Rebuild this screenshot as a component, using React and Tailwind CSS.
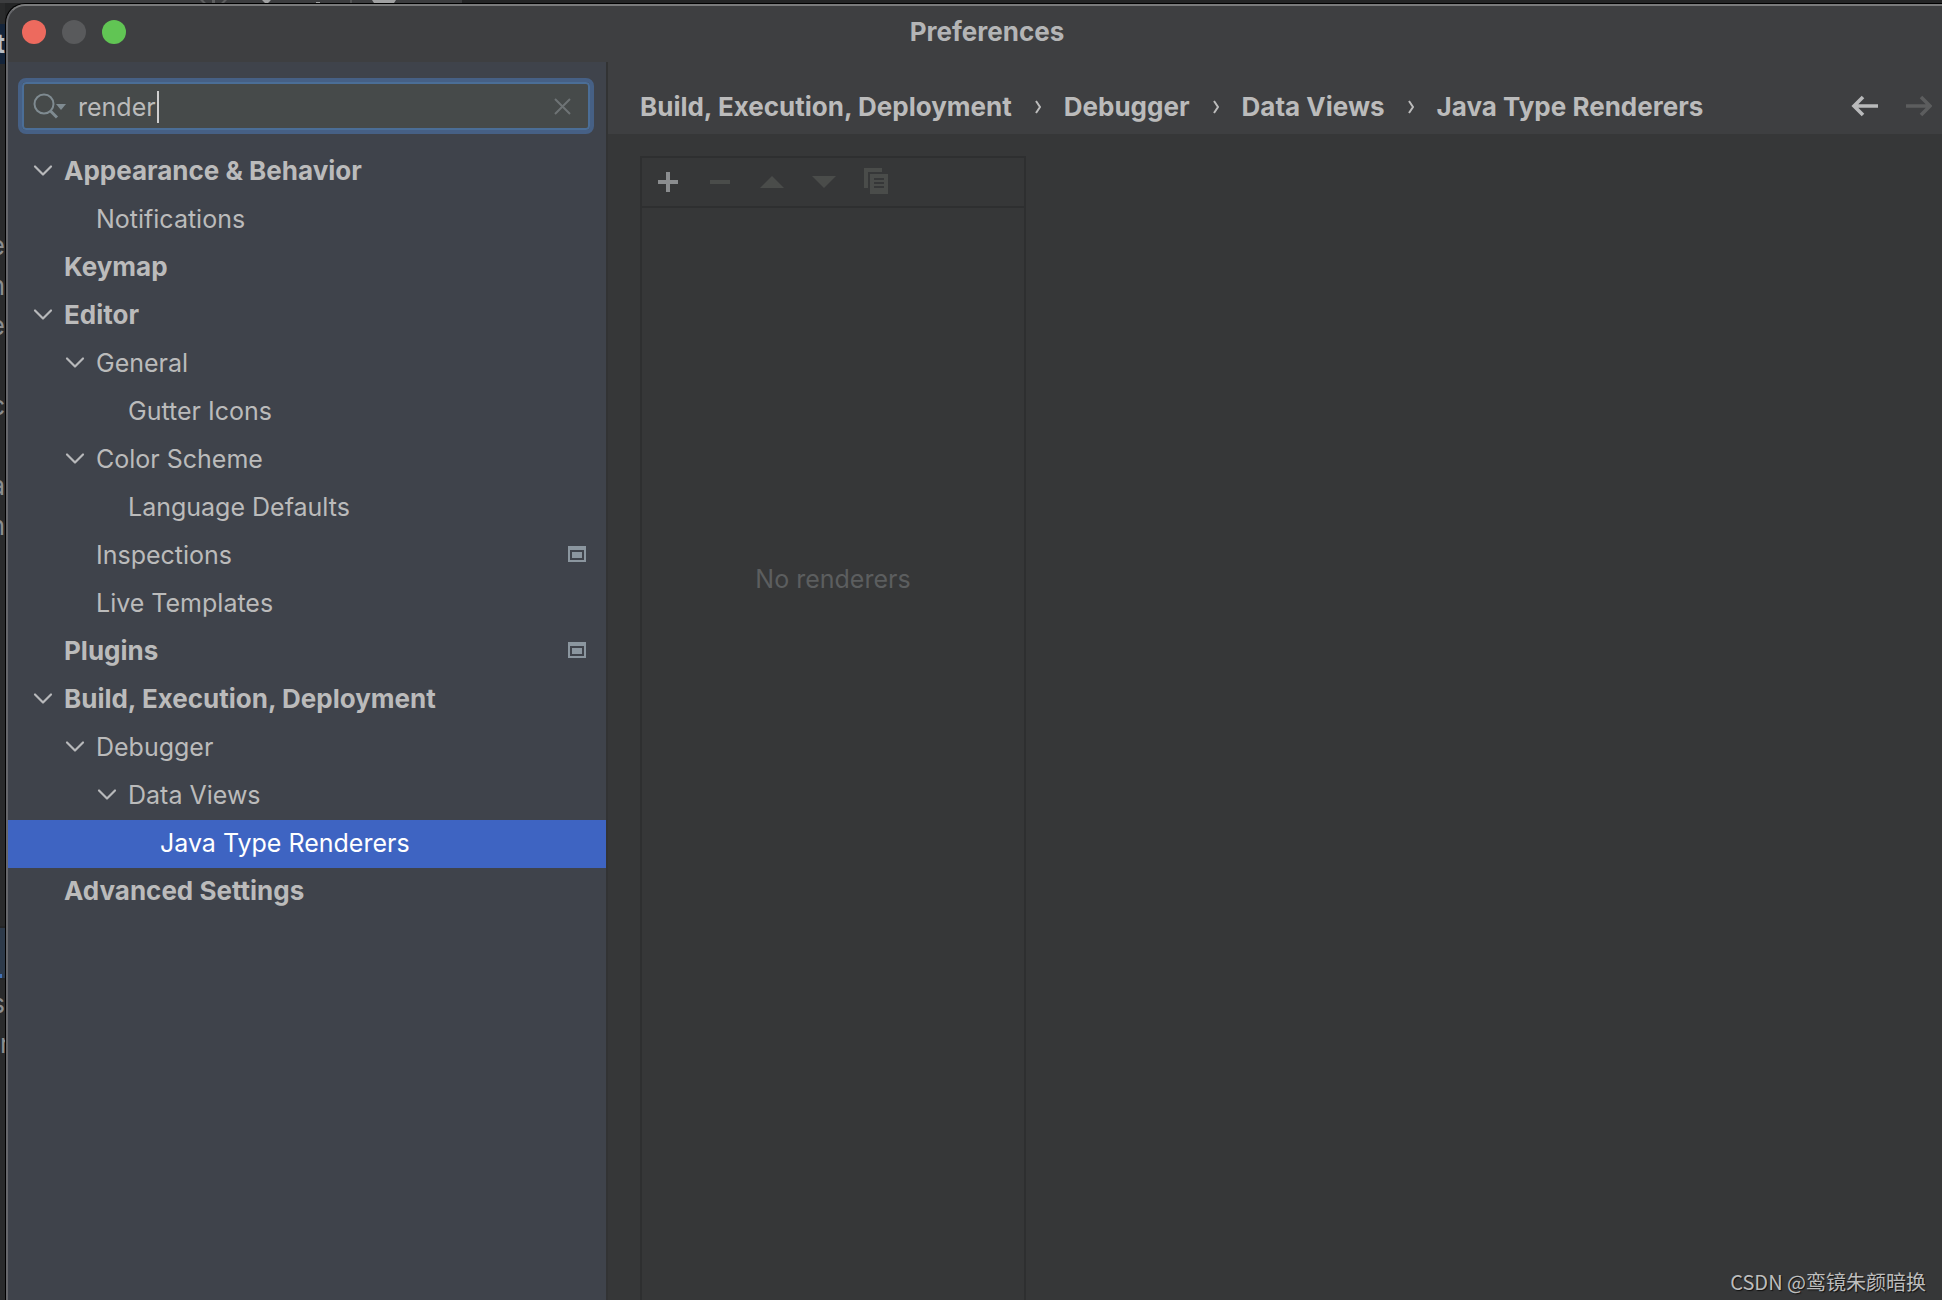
const TREE = [
  { label: "Appearance & Behavior", level: 0, open: true },
  { label: "Notifications", level: 1 },
  { label: "Keymap", level: 0 },
  { label: "Editor", level: 0, open: true },
  { label: "General", level: 1, open: true },
  { label: "Gutter Icons", level: 2 },
  { label: "Color Scheme", level: 1, open: true },
  { label: "Language Defaults", level: 2 },
  { label: "Inspections", level: 1, project: true },
  { label: "Live Templates", level: 1 },
  { label: "Plugins", level: 0, project: true },
  { label: "Build, Execution, Deployment", level: 0, open: true },
  { label: "Debugger", level: 1, open: true },
  { label: "Data Views", level: 2, open: true },
  { label: "Java Type Renderers", level: 3, selected: true },
  { label: "Advanced Settings", level: 0 },
];

const INDENT = ["pl-6", "pl-14", "pl-22", "pl-30"];
const CRUMBS = ["Build, Execution, Deployment", "Debugger", "Data Views", "Java Type Renderers"];

function Chevron() {
  return (
    <svg className="size-6" viewBox="0 0 24 24" fill="none" stroke="#b8b9bb" strokeWidth="2.2" strokeLinecap="round" strokeLinejoin="round">
      <path d="M3 7.500l8 8 8-8" />
    </svg>
  );
}

function ProjectIcon() {
  return (
    <svg className="size-6" viewBox="0 0 24 24" fill="#8b969f">
      <path fillRule="evenodd" d="M2 3h18v16H2zM4 7v10h14V7z" />
      <path d="M6 9h10v6H6z" />
    </svg>
  );
}

function TreeRow({ label, level, open, project, selected }) {
  const tone = selected ? "bg-[#3e64c2] text-white" : "text-[#bbbbbb]";
  const weight = level === 0 ? "text-[26px] font-bold" : "text-[25px] font-normal";
  return (
    <li>
      <button type="button" className={`flex h-12 w-full items-center gap-2 pr-4 pb-0.5 text-left ${INDENT[level]} ${tone} ${weight}`}>
        <span className="size-6 shrink-0">{open && <Chevron />}</span>
        <span className="grow whitespace-nowrap">{label}</span>
        {project && <ProjectIcon />}
      </button>
    </li>
  );
}

function Sidebar() {
  return (
    <aside className="w-[600px] shrink-0 border-r-2 border-[#323334] bg-[#3f434b]">
      <div className="pt-4 pr-3 pb-3.5 pl-2.5">
        <label className="flex h-14 items-center rounded-lg border-4 border-[#466085] bg-[#464a4a] pr-4 pl-2 ring-2 ring-[#4b6e97] ring-inset">
          <span className="sr-only">Search settings</span>
          <svg className="h-8 w-9 shrink-0" viewBox="0 0 36 32" fill="none" stroke="#7f8b91" strokeWidth="2">
            <circle cx="14" cy="14" r="9.500" />
            <path d="M20 20.500l7 7" strokeWidth="3" />
            <path d="M26 14h10l-5 6z" fill="#7f8b91" stroke="none" />
          </svg>
          <span className="ml-3 flex h-8 grow items-center pt-0.5">
            <input type="text" defaultValue="render" className="w-[79px] bg-transparent text-[25px] text-[#bbbbbb] outline-none" />
            <span className="h-8 w-0.5 bg-[#cfcfcf]" />
          </span>
          <button type="button" aria-label="Clear search">
            <svg className="size-5" viewBox="0 0 20 20" stroke="#6e7375" strokeWidth="2">
              <path d="M1 3l15 15M16 3L1 18" />
            </svg>
          </button>
        </label>
      </div>
      <ul>
        {TREE.map((row) => (
          <TreeRow key={row.label} {...row} />
        ))}
      </ul>
    </aside>
  );
}

function Breadcrumbs() {
  return (
    <header className="flex h-[72px] items-center justify-between bg-[#3e3f41] pt-[18px] pr-2.5 pl-8">
      <nav aria-label="Breadcrumb" className="flex items-center font-bold whitespace-nowrap text-[#bbbbbb]">
        {CRUMBS.map((crumb, i) => (
          <span key={crumb} className="flex items-center">
            {i > 0 && (
              <svg className="mx-[22px] h-4 w-2" viewBox="0 0 8 16" fill="none" stroke="#bbbbbb" strokeWidth="2">
                <path d="M2 2l4 6-4 6" />
              </svg>
            )}
            <a href="#">{crumb}</a>
          </span>
        ))}
      </nav>
      <div className="flex gap-[26px]">
        <button type="button" aria-label="Back">
          <svg className="h-6 w-7" viewBox="0 0 28 24" fill="none" stroke="#b9babb" strokeWidth="3.600">
            <path d="M28 11H4M13 2L4 11l9 9" />
          </svg>
        </button>
        <button type="button" aria-label="Forward" disabled>
          <svg className="h-6 w-7" viewBox="0 0 28 24" fill="none" stroke="#5c5d5e" strokeWidth="3.600">
            <path d="M2 11h24M17 2l9 9-9 9" />
          </svg>
        </button>
      </div>
    </header>
  );
}

const TOOLS = [
  { name: "Add", color: "#8b8d8f", path: "M4 12h8V4h4v8h8v4h-8v8h-4v-8H4z" },
  { name: "Remove", color: "#4a4c4a", path: "M4 12h20v4H4z" },
  { name: "Move up", color: "#4a4c4a", path: "M2 20L14 8l12 12z" },
  { name: "Move down", color: "#4a4c4a", path: "M2 8h24L14 20z" },
  { name: "Copy", color: "#4a4c4a", path: "M2 0h18v4H6v16H2zM8 6h18v20H8zM12 10v2h10v-2zM12 14v2h10v-2zM12 18v2h10v-2z" },
];

function RendererList() {
  return (
    <section className="flex w-[386px] flex-col border-2 border-b-0 border-[#2e2f30]">
      <div className="flex h-[50px] shrink-0 items-center gap-6 border-b-2 border-[#2e2f30] px-3">
        {TOOLS.map((tool) => (
          <button key={tool.name} type="button" aria-label={tool.name} disabled={tool.name !== "Add"}>
            <svg className="size-7" viewBox="0 0 28 28" fill={tool.color} fillRule="evenodd">
              <path d={tool.path} />
            </svg>
          </button>
        ))}
      </div>
      <p className="pt-[355px] text-center text-[25px] text-[#5c5e5f]">No renderers</p>
    </section>
  );
}

const BEHIND = [
  { text: "t", style: "h-10 mt-[21px] bg-[#14243a] text-[#b9bfc6] font-bold justify-end" },
  { text: "e", style: "mt-[162px] h-10" },
  { text: "n", style: "h-10" },
  { text: "e", style: "h-10" },
  { text: "c", style: "mt-10 h-10" },
  { text: "a", style: "mt-10 h-10" },
  { text: "n", style: "h-10" },
];

function BackgroundEdge() {
  return (
    <div className="flex w-[5px] shrink-0 flex-col overflow-hidden bg-[#2a2b2c] text-[#8b8d8f]" aria-hidden="true">
      {BEHIND.map((row, i) => (
        <span key={i} className={`flex shrink-0 items-center justify-end ${row.style}`}>{row.text}</span>
      ))}
      <span className="mt-[380px] flex h-[54px] shrink-0 items-end border-y-2 border-[#242526] bg-[#2d3a4a]">
        <span className="h-1 w-0.5 bg-[#4271b5]" />
      </span>
      <span className="mt-1 flex h-10 shrink-0 items-center justify-end">s</span>
      <span className="flex h-10 shrink-0 items-center justify-start">r</span>
    </div>
  );
}

export default function App() {
  return (
    <div className="relative flex h-screen flex-col overflow-hidden bg-[#242526] font-['Inter','Noto_Sans_CJK_SC',sans-serif] text-[26px] leading-8">
      <div className="h-[3px] w-[462px] shrink-0 bg-[#3c3d3f]" aria-hidden="true">
        <svg className="h-[3px] w-full" viewBox="0 0 462 3" fill="#a0a1a2">
          <path d="M200 0h3l3 3h-3zM227 0h-3l-3 3h3zM212 0h3v3h-3z" fill="#5e5f60" />
          <path d="M262 0h9l-3 3h-3zM372 0h24l-2 3h-20zM316 2h4v1h-4z" />
          <path d="M350 0h2v3h-2z" fill="#555657" />
        </svg>
      </div>
      <div className="flex min-h-0 grow">
        <BackgroundEdge />
        <main className="flex min-w-0 grow flex-col overflow-hidden rounded-tl-[20px] border-t border-l border-black bg-[#3e3f41]">
          <div className="flex min-h-0 grow flex-col rounded-tl-[19px] border-t-2 border-l-2 border-t-[#7a7b7c] border-l-[#66676b]">
            <div className="grid h-14 shrink-0 grid-cols-3 items-center pb-1">
              <div className="flex gap-4 pl-3.5">
                <button type="button" aria-label="Close" className="size-6 rounded-full bg-[#ed6a5e]" />
                <button type="button" aria-label="Minimize" className="size-6 rounded-full bg-[#595a5c]" />
                <button type="button" aria-label="Zoom" className="size-6 rounded-full bg-[#61c554]" />
              </div>
              <h1 className="pl-6 text-center font-bold text-[#b4b5b6]">Preferences</h1>
            </div>
            <div className="flex min-h-0 grow">
              <Sidebar />
              <div className="flex min-w-0 grow flex-col bg-[#363738]">
                <Breadcrumbs />
                <div className="flex min-h-0 grow pt-[22px] pl-8">
                  <RendererList />
                </div>
              </div>
            </div>
          </div>
        </main>
      </div>
      <p className="absolute right-4 bottom-1 font-['Noto_Sans_CJK_SC',sans-serif] text-xl text-[#bdbdbd] [text-shadow:1px_1px_1px_#111]">CSDN @鸾镜朱颜暗换</p>
    </div>
  );
}
